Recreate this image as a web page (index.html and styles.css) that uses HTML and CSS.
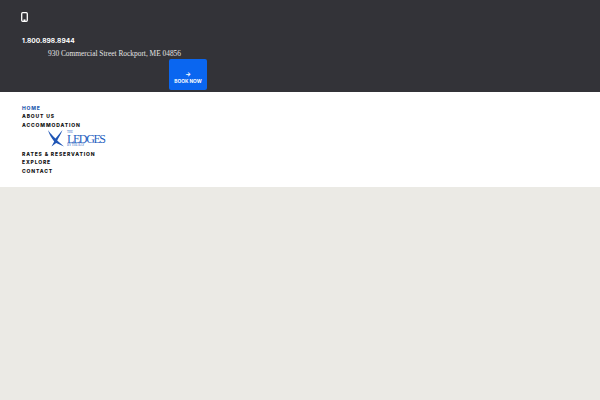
FILE: index.html
```html
<!DOCTYPE html>
<html lang="en">
<head>
  <meta charset="UTF-8">
  <title>The Ledges by the Bay</title>
  <link rel="stylesheet" href="styles.css">
</head>
<body>
  <header class="topbar">
    <svg class="phone-icon" width="7" height="10" viewBox="0 0 7 10">
      <rect x="0.7" y="0.7" width="5.6" height="8.6" rx="1" fill="none" stroke="#fff" stroke-width="1.3"/>
      <rect x="2.5" y="7.4" width="2" height="1.6" fill="#fff"/>
    </svg>
    <div class="phone">1.800.898.8944</div>
    <div class="address">930 Commercial Street Rockport, ME 04856</div>
    <a class="book-btn" href="#">
      <span class="arrow">→</span>
      <span>BOOK NOW</span>
    </a>
  </header>

  <nav class="menu">
    <a class="active" href="#">HOME</a>
    <a href="#">ABOUT US</a>
    <a href="#">ACCOMMODATION</a>
    <div class="logo">
      <svg width="17" height="18" viewBox="0 0 17 18">
        <path d="M0 0 C1 2 5 6 7.5 8.5 L14.5 0 C13 4 10.5 8 9.2 10.5 L16 16.5 L8.2 13 L3.5 16.5 L6.2 11.5 C3.5 8 1 4 0 0Z" fill="#1f55b5"/>
      </svg>
      <div class="logo-text">
        <span class="logo-small">THE</span>
        <span class="logo-name">LEDGES</span>
        <span class="logo-small">BY THE BAY</span>
      </div>
    </div>
    <a href="#">RATES &amp; RESERVATION</a>
    <a href="#">EXPLORE</a>
    <a href="#">CONTACT</a>
  </nav>

  <main class="content"></main>
</body>
</html>
```

FILE: styles.css
```css
* {
  box-sizing: border-box;
}

body {
  margin: 0;
  height: 400px;
  overflow: hidden;
  display: flex;
  flex-direction: column;
  font-family: "Inter", Arial, sans-serif;
  background: #ebeae5;
}

.topbar {
  height: 92px;
  padding: 12px 0 0 22px;
  background: #333338;
  color: white;
}

.phone-icon {
  display: block;
  margin-left: -1px;
}

.phone {
  margin-top: 14px;
  font-size: 6.6px;
  line-height: 10px;
  font-weight: 700;
  letter-spacing: 0.05px;
}

.address {
  margin: 2px 0 0 26px;
  font-family: "Liberation Serif", serif;
  font-size: 7.4px;
  line-height: 11px;
  color: #e4e4e4;
  white-space: nowrap;
}

.book-btn {
  display: flex;
  flex-direction: column;
  align-items: center;
  justify-content: flex-end;
  width: 38px;
  height: 31px;
  margin: 0 0 0 147px;
  padding-bottom: 5px;
  background: #0a66f0;
  border-radius: 2px;
  color: white;
  font-size: 4.8px;
  line-height: 7px;
  font-weight: 700;
  text-decoration: none;
  white-space: nowrap;
}

.arrow {
  font-size: 6px;
  line-height: 8px;
}

.menu {
  height: 95px;
  padding: 11.5px 0 0 22px;
  background: white;
}

.menu a {
  display: block;
  height: 8.7px;
  font-size: 5px;
  line-height: 9px;
  font-weight: 800;
  letter-spacing: 0.85px;
  color: #111;
  text-decoration: none;
}

.menu a.active {
  color: #2a5db0;
}

.logo {
  display: flex;
  align-items: center;
  gap: 2px;
  height: 19px;
  margin: 0 0 1px 26px;
}

.logo-text {
  display: flex;
  flex-direction: column;
  font-family: "Liberation Serif", serif;
  color: #1f5fbf;
}

.logo-small {
  font-size: 3px;
  line-height: 3px;
}

.logo-name {
  font-size: 12px;
  line-height: 10px;
  letter-spacing: -1.4px;
}

.content {
  flex: 1;
  background: #ebeae5;
}
```
